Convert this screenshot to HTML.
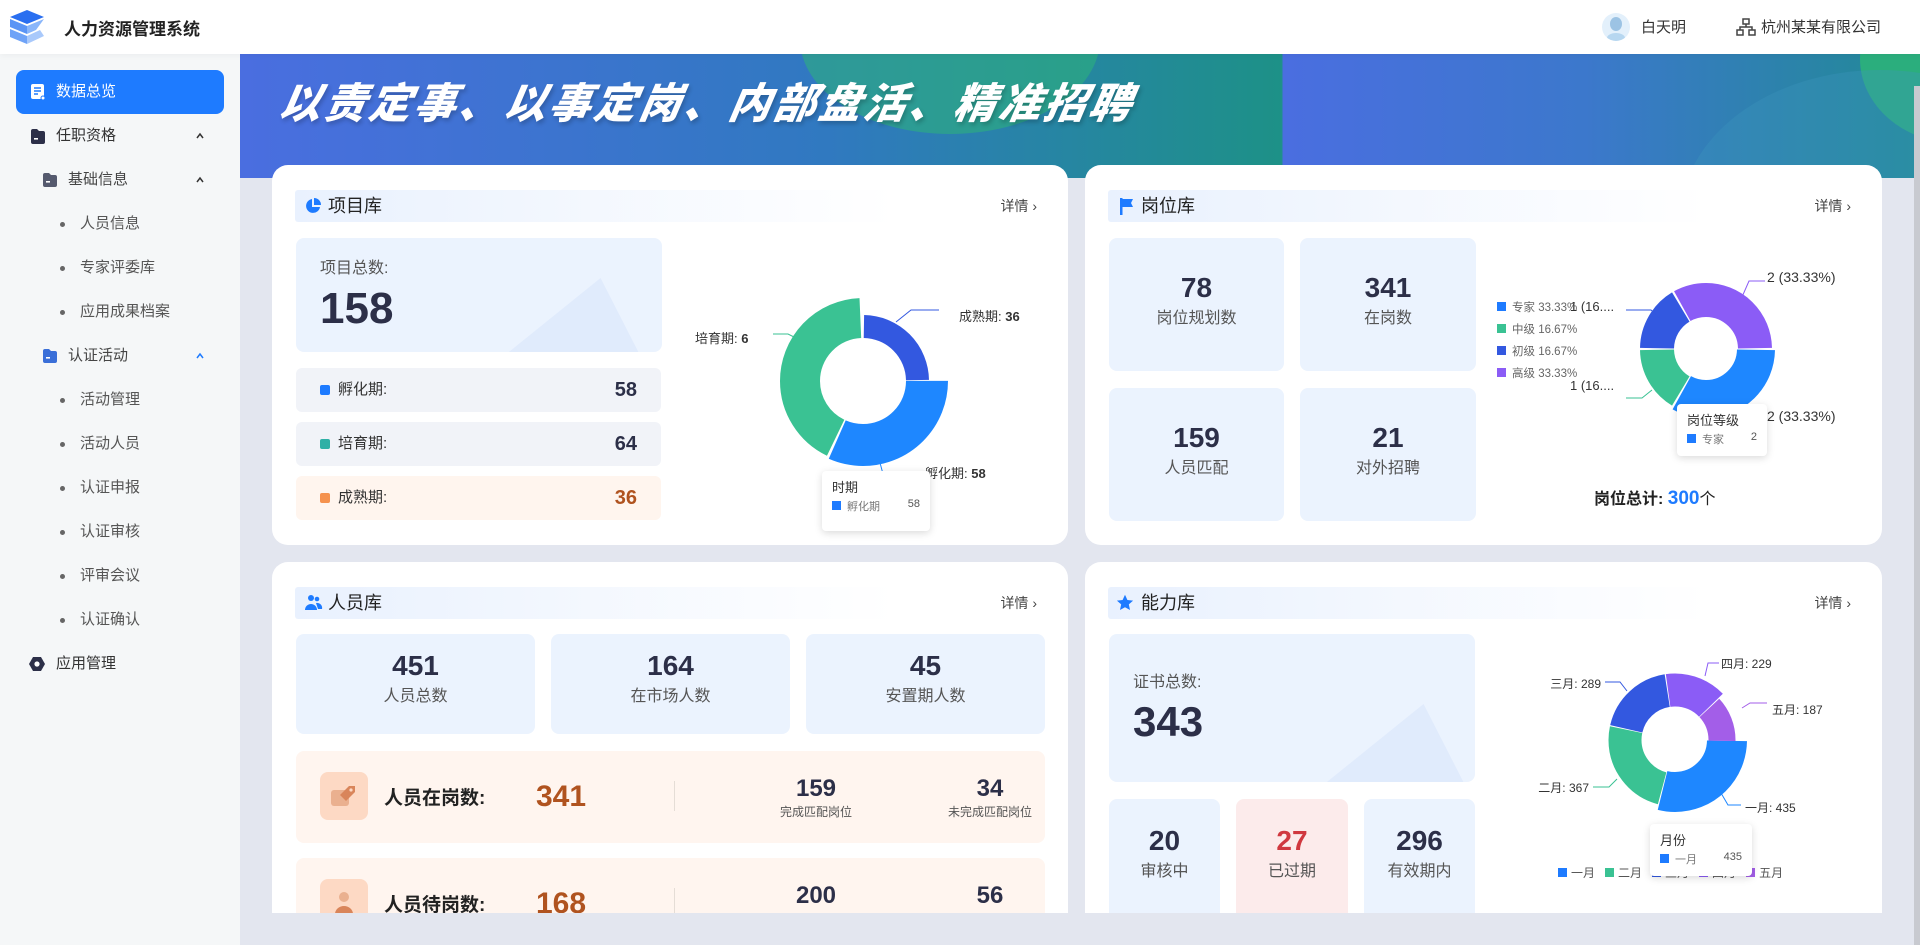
<!DOCTYPE html>
<html><head><meta charset="utf-8">
<style>
*{margin:0;padding:0;box-sizing:border-box}
body{width:1920px;height:945px;overflow:hidden;background:#e3e6ef;font-family:"Liberation Sans","Noto Sans CJK SC",sans-serif;color:#333;position:relative}
.a{position:absolute}
.hdr{left:0;top:0;width:1920px;height:54px;background:#fff;box-shadow:0 2px 6px rgba(0,0,0,.04);z-index:2}
.side{left:0;top:54px;width:240px;height:891px;background:#f5f7f8}
.mi{position:absolute;left:0;width:240px;height:44px;line-height:44px;font-size:15px;color:#333}
.dot{position:absolute;left:60px;top:20px;width:5px;height:5px;border-radius:50%;background:#666}
.car{position:absolute;left:196px;top:18px;width:8px;height:8px}
.ch{position:absolute;left:23px;top:25px;right:23px;height:32px;background:linear-gradient(90deg,#e9f1fe,#fff 80%);border-radius:3px}
.ch .t{position:absolute;left:33px;top:0;line-height:32px;font-size:18px;color:#222}
.ch .d{position:absolute;right:8px;top:0;line-height:32px;font-size:14px;color:#444}
.card{position:absolute;background:#fff;border-radius:16px;overflow:hidden}
.box{position:absolute;background:#ebf3fe;border-radius:8px;text-align:center}
.num{font-weight:bold;color:#2c2f48}
.lab{color:#555;font-size:16px}
.row{position:absolute;left:24px;width:365px;height:44px;border-radius:6px;background:#f1f3f8;font-size:15px;line-height:44px}
.row i{position:absolute;left:24px;top:17px;width:10px;height:10px;border-radius:2px}
.row span{position:absolute;left:42px;color:#333}
.row b{position:absolute;right:24px;font-size:20px;color:#2c2f48}
.lbl{position:absolute;font-size:13px;color:#333;white-space:nowrap}
.tip{position:absolute;background:#fff;box-shadow:0 2px 8px rgba(0,0,0,.15);border-radius:4px;font-size:13px}
.orow{position:absolute;left:24px;width:749px;height:92px;background:#fff5ef;border-radius:8px}
</style></head><body>

<div class="a hdr">
  <svg class="a" style="left:10px;top:10px" width="34" height="34" viewBox="0 0 34 34">
    <polygon points="17,0 34,7 17,14 0,7" fill="#2a6ff0"/>
    <polygon points="0,9 17,16 17,24 0,17" fill="#5b95f5"/>
    <polygon points="17,16 34,9 26,20 17,24" fill="#8ab6fa"/>
    <polygon points="0,19 17,26 17,34 0,27" fill="#6fa3f7"/>
    <polygon points="17,26 30,20 34,26 17,34" fill="#a9c9fb"/>
  </svg>
  <div class="a" style="left:64px;top:15px;font-size:17px;font-weight:bold;color:#222">人力资源管理系统</div>
  <div class="a" style="left:1602px;top:13px;width:28px;height:28px;border-radius:50%;background:#e3f0fb;overflow:hidden">
    <div class="a" style="left:8px;top:4px;width:12px;height:14px;border-radius:50%;background:#9cc3e4"></div>
    <div class="a" style="left:5px;top:20px;width:18px;height:10px;border-radius:50% 50% 0 0;background:#b7d7f0"></div>
  </div>
  <div class="a" style="left:1641px;top:16px;font-size:15px;color:#333">白天明</div>
  <svg class="a" style="left:1736px;top:18px" width="20" height="18" viewBox="0 0 20 18" fill="none" stroke="#444" stroke-width="1.5"><rect x="7" y="1" width="6" height="5"/><rect x="1" y="12" width="6" height="5"/><rect x="13" y="12" width="6" height="5"/><path d="M10 6v3M4 12V9h12v3"/></svg>
  <div class="a" style="left:1761px;top:16px;font-size:15px;color:#333">杭州某某有限公司</div>
</div>

<div class="a side"></div>
<div class="a" style="left:16px;top:70px;width:208px;height:44px;border-radius:8px;background:#1e7bff"></div>
<div class="mi" style="top:70px;color:#fff"><svg class="a" style="left:31px;top:14px" width="14" height="16" viewBox="0 0 14 16"><rect x="0" y="0" width="13" height="15" rx="2" fill="#fff"/><path d="M3 4h7M3 7h7M3 10h4" stroke="#1e7bff" stroke-width="1.5"/><circle cx="12" cy="14" r="2" fill="#fff" stroke="#1e7bff"/></svg><span class="a" style="left:56px">数据总览</span></div>
<div class="mi" style="top:114px"><svg class="a" style="left:31px;top:15px" width="14" height="15" viewBox="0 0 14 15"><path d="M0 2a2 2 0 0 1 2-2h4l2 2h4a2 2 0 0 1 2 2v9a2 2 0 0 1-2 2H2a2 2 0 0 1-2-2z" fill="#2c2f48"/><rect x="3" y="9" width="4" height="1.6" fill="#fff"/></svg><span class="a" style="left:56px">任职资格</span><svg class="car" viewBox="0 0 8 8"><path d="M1 6l3-4 3 4" fill="none" stroke="#333" stroke-width="1.5"/></svg></div>
<div class="mi" style="top:158px;color:#444"><svg class="a" style="left:43px;top:15px" width="14" height="14" viewBox="0 0 14 14"><path d="M0 2a2 2 0 0 1 2-2h4l2 2h4a2 2 0 0 1 2 2v8a2 2 0 0 1-2 2H2a2 2 0 0 1-2-2z" fill="#555a6e"/><rect x="3" y="8" width="4" height="1.6" fill="#fff"/></svg><span class="a" style="left:68px">基础信息</span><svg class="car" viewBox="0 0 8 8"><path d="M1 6l3-4 3 4" fill="none" stroke="#333" stroke-width="1.5"/></svg></div>
<div class="mi" style="top:202px;color:#555"><i class="dot"></i><span class="a" style="left:80px">人员信息</span></div>
<div class="mi" style="top:246px;color:#555"><i class="dot"></i><span class="a" style="left:80px">专家评委库</span></div>
<div class="mi" style="top:290px;color:#555"><i class="dot"></i><span class="a" style="left:80px">应用成果档案</span></div>
<div class="mi" style="top:334px;color:#444"><svg class="a" style="left:43px;top:15px" width="14" height="14" viewBox="0 0 14 14"><path d="M0 2a2 2 0 0 1 2-2h4l2 2h4a2 2 0 0 1 2 2v8a2 2 0 0 1-2 2H2a2 2 0 0 1-2-2z" fill="#3a6fd8"/><rect x="3" y="8" width="4" height="1.6" fill="#fff"/></svg><span class="a" style="left:68px">认证活动</span><svg class="car" viewBox="0 0 8 8"><path d="M1 6l3-4 3 4" fill="none" stroke="#1e7bff" stroke-width="1.5"/></svg></div>
<div class="mi" style="top:378px;color:#555"><i class="dot"></i><span class="a" style="left:80px">活动管理</span></div>
<div class="mi" style="top:422px;color:#555"><i class="dot"></i><span class="a" style="left:80px">活动人员</span></div>
<div class="mi" style="top:466px;color:#555"><i class="dot"></i><span class="a" style="left:80px">认证申报</span></div>
<div class="mi" style="top:510px;color:#555"><i class="dot"></i><span class="a" style="left:80px">认证审核</span></div>
<div class="mi" style="top:554px;color:#555"><i class="dot"></i><span class="a" style="left:80px">评审会议</span></div>
<div class="mi" style="top:598px;color:#555"><i class="dot"></i><span class="a" style="left:80px">认证确认</span></div>
<div class="mi" style="top:642px"><svg class="a" style="left:29px;top:14px" width="16" height="16" viewBox="0 0 16 16"><polygon points="4,1 12,1 16,8 12,15 4,15 0,8" fill="#2c2f48"/><circle cx="8" cy="8" r="2.6" fill="#fff"/></svg><span class="a" style="left:56px">应用管理</span></div>

<!-- banner -->
<div class="a" style="left:240px;top:54px;width:1680px;height:124px;overflow:hidden;background:linear-gradient(90deg,#4a6ee0 0%,#3079c0 35%,#1d9187 62%,#4a6ee0 62.1%,#3c78cc 80%,#218a95 100%)">
  <div class="a" style="left:560px;top:-110px;width:300px;height:190px;border-radius:50%;background:rgba(46,180,120,.55)"></div>
  <div class="a" style="left:1620px;top:-80px;width:200px;height:170px;border-radius:50%;background:#2bae7d"></div>
  <div class="a" style="left:1440px;top:16px;width:400px;height:300px;border-radius:50%;background:rgba(60,150,190,.35)"></div>
  <div class="a" style="left:40px;top:16px;font-size:42px;font-weight:900;font-style:italic;color:#fff;letter-spacing:3px;transform:skewX(-10deg);text-shadow:2px 3px 4px rgba(0,0,0,.2);font-family:'Noto Sans CJK SC',sans-serif">以责定事、以事定岗、内部盘活、精准招聘</div>
</div>
<div class="a" style="left:1914px;top:86px;width:6px;height:859px;background:#c8cad0"></div>

<!-- card 1 -->
<div class="card" style="left:272px;top:165px;width:796px;height:380px">
  <div class="ch"><svg class="a" style="left:10px;top:8px" width="16" height="16" viewBox="0 0 16 16"><path d="M7 1A7 7 0 1 0 15 9H7z" fill="#1e7bff"/><path d="M9 0v7h7A7 7 0 0 0 9 0z" fill="#1e7bff"/></svg><span class="t">项目库</span><span class="d">详情 ›</span></div>
  <div class="box" style="left:24px;top:73px;width:366px;height:114px;text-align:left;overflow:hidden">
    <div class="a" style="left:220px;top:40px;width:0;height:0;border-left:70px solid transparent;border-right:70px solid transparent;border-bottom:80px solid #dde9fb;transform:skewX(-20deg);opacity:.8"></div>
    <div class="a" style="left:24px;top:16px;font-size:16px;color:#555">项目总数:</div>
    <div class="a num" style="left:24px;top:46px;font-size:44px">158</div>
  </div>
  <div class="row" style="top:203px"><i style="background:#1e7bff"></i><span>孵化期:</span><b>58</b></div>
  <div class="row" style="top:257px"><i style="background:#2fb0a6"></i><span>培育期:</span><b>64</b></div>
  <div class="row" style="top:311px;background:#fff5ee"><i style="background:#f5924e"></i><span>成熟期:</span><b style="color:#b0531f">36</b></div>
  <svg class="a" style="left:0;top:0" width="796" height="380">
    <g transform="translate(591,216) rotate(-90)">
      <circle r="54.5" fill="none" stroke="#3358e0" stroke-width="23" pathLength="360" stroke-dasharray="88 272" stroke-dashoffset="-1"/>
      <circle r="64" fill="none" stroke="#1e87ff" stroke-width="42" pathLength="360" stroke-dasharray="114 246" stroke-dashoffset="-90"/>
      <circle r="63" fill="none" stroke="#3ac293" stroke-width="40" pathLength="360" stroke-dasharray="152 208" stroke-dashoffset="-206"/>
    </g>
    <path d="M624 157L639 145H667" stroke="#3358e0" fill="none"/>
    <path d="M526 174L516 169H501" stroke="#3ac293" fill="none"/>
    <path d="M607 294L611 309" stroke="#1e87ff" fill="none"/>
  </svg>
  <div class="lbl" style="left:687px;top:141px">成熟期: <b>36</b></div>
  <div class="lbl" style="left:423px;top:163px">培育期: <b>6</b></div>
  <div class="lbl" style="left:653px;top:298px">孵化期: <b>58</b></div>
  <div class="tip" style="left:550px;top:306px;width:108px;height:60px;padding:6px 10px;color:#333">时期<div style="font-size:11px;color:#777;margin-top:2px"><i style="display:inline-block;width:9px;height:9px;background:#1e7bff;margin-right:6px"></i>孵化期<span style="float:right;color:#555">58</span></div></div>
</div>

<!-- card 2 -->
<div class="card" style="left:1085px;top:165px;width:797px;height:380px">
  <div class="ch"><svg class="a" style="left:12px;top:8px" width="14" height="17" viewBox="0 0 14 17"><rect x="0" y="0" width="2.5" height="17" fill="#1e7bff"/><path d="M2 1h11l-2 4 2 4H2z" fill="#1e7bff"/></svg><span class="t">岗位库</span><span class="d">详情 ›</span></div>
  <div class="box" style="left:24px;top:73px;width:175px;height:133px"><div class="num" style="font-size:28px;margin-top:34px">78</div><div class="lab">岗位规划数</div></div>
  <div class="box" style="left:215px;top:73px;width:176px;height:133px"><div class="num" style="font-size:28px;margin-top:34px">341</div><div class="lab">在岗数</div></div>
  <div class="box" style="left:24px;top:223px;width:175px;height:133px"><div class="num" style="font-size:28px;margin-top:34px">159</div><div class="lab">人员匹配</div></div>
  <div class="box" style="left:215px;top:223px;width:176px;height:133px"><div class="num" style="font-size:28px;margin-top:34px">21</div><div class="lab">对外招聘</div></div>
  <svg class="a" style="left:0;top:0" width="797" height="380">
    <g transform="translate(621,184) rotate(-90)">
      <circle r="50" fill="none" stroke="#1e87ff" stroke-width="38" pathLength="360" stroke-dasharray="118 242" stroke-dashoffset="-91"/>
      <circle r="49" fill="none" stroke="#3ac293" stroke-width="34" pathLength="360" stroke-dasharray="58 302" stroke-dashoffset="-211"/>
      <circle r="49" fill="none" stroke="#3358e0" stroke-width="34" pathLength="360" stroke-dasharray="58 302" stroke-dashoffset="-271"/>
      <circle r="49" fill="none" stroke="#8b5cf6" stroke-width="34" pathLength="360" stroke-dasharray="118 242" stroke-dashoffset="-331"/>
    </g>
    <path d="M575 153L566 145H541" stroke="#3358e0" fill="none"/>
    <path d="M567 225L557 233H541" stroke="#3ac293" fill="none"/>
    <path d="M657 132L664 116H680" stroke="#8b5cf6" fill="none"/>
  </svg>
  <div class="a" style="left:412px;top:132px;font-size:11.5px;color:#666;line-height:22px">
    <div><i style="display:inline-block;width:9px;height:9px;background:#1e7bff;margin-right:6px"></i>专家 33.33%</div>
    <div><i style="display:inline-block;width:9px;height:9px;background:#3ac293;margin-right:6px"></i>中级 16.67%</div>
    <div><i style="display:inline-block;width:9px;height:9px;background:#3358e0;margin-right:6px"></i>初级 16.67%</div>
    <div><i style="display:inline-block;width:9px;height:9px;background:#8b5cf6;margin-right:6px"></i>高级 33.33%</div>
  </div>
  <div class="lbl" style="left:485px;top:134px;font-size:13px">1 (16....</div>
  <div class="lbl" style="left:485px;top:213px;font-size:13px">1 (16....</div>
  <div class="lbl" style="left:682px;top:104px;font-size:14px">2 (33.33%)</div>
  <div class="lbl" style="left:682px;top:243px;font-size:14px">2 (33.33%)</div>
  <div class="tip" style="left:592px;top:239px;width:90px;height:52px;padding:6px 10px;color:#333">岗位等级<div style="font-size:11px;color:#777;margin-top:2px"><i style="display:inline-block;width:9px;height:9px;background:#1e7bff;margin-right:6px"></i>专家<span style="float:right;color:#555">2</span></div></div>
  <div class="a" style="left:509px;top:320px;font-size:16px;font-weight:bold;color:#222">岗位总计: <span style="color:#1e7bff;font-size:19px">300</span><span style="font-weight:normal">个</span></div>
</div>

<!-- card 3 -->
<div class="card" style="left:272px;top:562px;width:796px;height:351px;border-radius:16px 16px 0 0">
  <div class="ch"><svg class="a" style="left:10px;top:7px" width="18" height="18" viewBox="0 0 18 18"><circle cx="6" cy="4" r="3" fill="#1e7bff"/><circle cx="12" cy="5" r="2.3" fill="#1e7bff"/><path d="M0 16a6 6 0 0 1 12 0z" fill="#1e7bff"/><path d="M11 9a5 5 0 0 1 6 6h-4z" fill="#1e7bff"/></svg><span class="t">人员库</span><span class="d">详情 ›</span></div>
  <div class="box" style="left:24px;top:72px;width:239px;height:100px"><div class="num" style="font-size:28px;margin-top:16px">451</div><div class="lab">人员总数</div></div>
  <div class="box" style="left:279px;top:72px;width:239px;height:100px"><div class="num" style="font-size:28px;margin-top:16px">164</div><div class="lab">在市场人数</div></div>
  <div class="box" style="left:534px;top:72px;width:239px;height:100px"><div class="num" style="font-size:28px;margin-top:16px">45</div><div class="lab">安置期人数</div></div>
  <div class="orow" style="top:189px">
    <div class="a" style="left:24px;top:21px;width:48px;height:48px;border-radius:8px;background:#fdd9c4"></div>
    <svg class="a" style="left:34px;top:32px" width="28" height="26" viewBox="0 0 28 26"><rect x="1" y="7" width="18" height="16" rx="3" fill="#eab08f"/><path d="M10 12l9-9h6v6l-9 9-6-6z" fill="#d9855a"/><circle cx="21" cy="7" r="1.6" fill="#fdd9c4"/></svg>
    <div class="a" style="left:88px;top:32px;font-size:19px;font-weight:bold;color:#222">人员在岗数:</div>
    <div class="a" style="left:240px;top:29px;font-size:30px;font-weight:bold;color:#b0531f">341</div>
    <div class="a" style="left:378px;top:30px;width:1px;height:30px;background:#e5ddd6"></div>
    <div class="a" style="left:440px;top:24px;width:160px;text-align:center"><div class="num" style="font-size:24px">159</div><div style="font-size:12px;color:#555">完成匹配岗位</div></div>
    <div class="a" style="left:614px;top:24px;width:160px;text-align:center"><div class="num" style="font-size:24px">34</div><div style="font-size:12px;color:#555">未完成匹配岗位</div></div>
  </div>
  <div class="orow" style="top:296px">
    <div class="a" style="left:24px;top:21px;width:48px;height:48px;border-radius:8px;background:#fdd9c4"></div>
    <svg class="a" style="left:34px;top:30px" width="28" height="28" viewBox="0 0 28 28"><circle cx="14" cy="9" r="5" fill="#eab08f"/><path d="M5 26a9 8 0 0 1 18 0z" fill="#d9855a"/></svg>
    <div class="a" style="left:88px;top:32px;font-size:19px;font-weight:bold;color:#222">人员待岗数:</div>
    <div class="a" style="left:240px;top:29px;font-size:30px;font-weight:bold;color:#b0531f">168</div>
    <div class="a" style="left:378px;top:30px;width:1px;height:30px;background:#e5ddd6"></div>
    <div class="a" style="left:440px;top:24px;width:160px;text-align:center"><div class="num" style="font-size:24px">200</div></div>
    <div class="a" style="left:614px;top:24px;width:160px;text-align:center"><div class="num" style="font-size:24px">56</div></div>
  </div>
</div>

<!-- card 4 -->
<div class="card" style="left:1085px;top:562px;width:797px;height:351px;border-radius:16px 16px 0 0">
  <div class="ch"><svg class="a" style="left:8px;top:7px" width="18" height="18" viewBox="0 0 24 24"><path d="M12 1l3.2 7 7.6.8-5.7 5.1 1.6 7.5L12 17.6 5.3 21.4l1.6-7.5L1.2 8.8 8.8 8z" fill="#1e7bff"/></svg><span class="t">能力库</span><span class="d">详情 ›</span></div>
  <div class="box" style="left:24px;top:72px;width:366px;height:148px;text-align:left;overflow:hidden">
    <div class="a" style="left:230px;top:70px;width:0;height:0;border-left:70px solid transparent;border-right:70px solid transparent;border-bottom:80px solid #dde9fb;transform:skewX(-20deg);opacity:.8"></div>
    <div class="a" style="left:24px;top:34px;font-size:16px;color:#555">证书总数:</div>
    <div class="a num" style="left:24px;top:64px;font-size:42px">343</div>
  </div>
  <div class="box" style="left:24px;top:237px;width:111px;height:130px"><div class="num" style="font-size:28px;margin-top:26px">20</div><div class="lab">审核中</div></div>
  <div class="box" style="left:151px;top:237px;width:112px;height:130px;background:#fcebeb"><div class="num" style="font-size:28px;margin-top:26px;color:#d0383f">27</div><div class="lab">已过期</div></div>
  <div class="box" style="left:279px;top:237px;width:111px;height:130px"><div class="num" style="font-size:28px;margin-top:26px">296</div><div class="lab">有效期内</div></div>
  <svg class="a" style="left:0;top:0" width="797" height="351">
    <g transform="translate(0,-7)">
    <g transform="translate(590,185) rotate(-90)">
      <circle r="52" fill="none" stroke="#1e87ff" stroke-width="40" pathLength="360" stroke-dasharray="103 257" stroke-dashoffset="-91"/>
      <circle r="50" fill="none" stroke="#3ac293" stroke-width="33" pathLength="360" stroke-dasharray="87 273" stroke-dashoffset="-195"/>
      <circle r="50" fill="none" stroke="#3358e0" stroke-width="33" pathLength="360" stroke-dasharray="68 292" stroke-dashoffset="-283"/>
      <circle r="50" fill="none" stroke="#8b5cf6" stroke-width="33" pathLength="360" stroke-dasharray="54 306" stroke-dashoffset="-352"/>
      <circle r="47" fill="none" stroke="#a35ee8" stroke-width="27" pathLength="360" stroke-dasharray="44 316" stroke-dashoffset="-407"/>
    </g>
    <path d="M620 121L623 108H634" stroke="#8b5cf6" fill="none"/>
    <path d="M542 136L535 127H520" stroke="#3358e0" fill="none"/>
    <path d="M657 153L665 148H682" stroke="#a35ee8" fill="none"/>
    <path d="M532 224L524 232H508" stroke="#3ac293" fill="none"/>
    <path d="M636 238L643 250H656" stroke="#1e87ff" fill="none"/>
    </g>
  </svg>
  <div class="lbl" style="left:636px;top:93px;font-size:12px">四月: 229</div>
  <div class="lbl" style="left:460px;top:113px;width:56px;text-align:right;font-size:12px">三月: 289</div>
  <div class="lbl" style="left:687px;top:139px;font-size:12px">五月: 187</div>
  <div class="lbl" style="left:446px;top:217px;width:58px;text-align:right;font-size:12px">二月: 367</div>
  <div class="lbl" style="left:660px;top:237px;font-size:12px">一月: 435</div>
  <div class="a" style="left:473px;top:302px;font-size:12px;color:#555;white-space:nowrap">
    <i style="display:inline-block;width:9px;height:9px;background:#1e7bff;margin-right:4px"></i>一月&nbsp;&nbsp;
    <i style="display:inline-block;width:9px;height:9px;background:#3ac293;margin-right:4px"></i>二月&nbsp;&nbsp;
    <i style="display:inline-block;width:9px;height:9px;background:#3358e0;margin-right:4px"></i>三月&nbsp;&nbsp;
    <i style="display:inline-block;width:9px;height:9px;background:#8b5cf6;margin-right:4px"></i>四月&nbsp;&nbsp;
    <i style="display:inline-block;width:9px;height:9px;background:#a35ee8;margin-right:4px"></i>五月
  </div>
  <div class="tip" style="left:565px;top:262px;width:102px;height:52px;padding:6px 10px;color:#333">月份<div style="font-size:11px;color:#777;margin-top:2px"><i style="display:inline-block;width:9px;height:9px;background:#1e7bff;margin-right:6px"></i>一月<span style="float:right;color:#555">435</span></div></div>
</div>

</body></html>
